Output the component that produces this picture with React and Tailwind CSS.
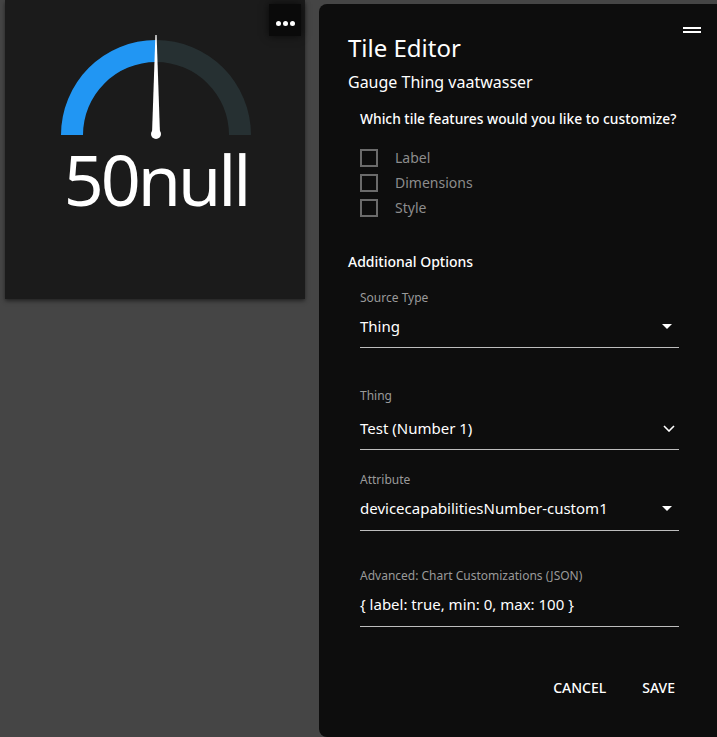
import React from "react";

function Checkbox({ label }) {
  return (
    <div className="flex items-center h-[25px]">
      <div className="w-[18px] h-[18px] border-2 border-[#6b6b6b] box-border" />
      <span className="ml-[17px] text-[14px] leading-[20px] text-[#8c8c8c]">{label}</span>
    </div>
  );
}

function Caret() {
  return (
    <svg width="10" height="5" viewBox="0 0 10 5" className="mr-[7px]">
      <path d="M0 0 L10 0 L5 5 Z" fill="#ffffff" />
    </svg>
  );
}

function Chevron() {
  return (
    <svg width="12" height="7" viewBox="0 0 12 7" className="mr-[4px]">
      <path d="M1 1 L6 6 L11 1" fill="none" stroke="#ffffff" strokeWidth="1.6" />
    </svg>
  );
}

function Field({ label, value, icon, mt, gap, pb }) {
  return (
    <div className="ml-[12px]" style={{ marginTop: mt }}>
      <div className="text-[12px] leading-[16px] text-[#9a9a9a]">{label}</div>
      <div
        className="flex items-center justify-between border-b border-[#bdbdbd]"
        style={{ marginTop: gap, paddingBottom: pb }}
      >
        <span className="text-[15px] leading-[28px] text-white whitespace-nowrap">{value}</span>
        {icon}
      </div>
    </div>
  );
}

export default function App() {
  return (
    <div
      className="w-[717px] h-[737px] bg-[#454545] flex overflow-hidden"
      style={{ fontFamily: '"Noto Sans", "Open Sans", sans-serif' }}
    >
      <div className="relative w-[300px] h-[299px] ml-[5px] bg-[#1b1b1b] flex flex-col items-center shadow-[0_2px_4px_rgba(0,0,0,0.5)] shrink-0">
        <svg width="200" height="112" viewBox="0 0 200 112" className="mt-[30px] ml-[2px]">
          <path d="M5 105 A95 95 0 0 1 100 10 L100 32 A73 73 0 0 0 27 105 Z" fill="#2196f3" />
          <path d="M100 10 A95 95 0 0 1 195 105 L173 105 A73 73 0 0 0 100 32 Z" fill="#263032" />
          <path d="M99.4 5 L100.6 5 L104 104 L96 104 Z" fill="#ffffff" />
          <circle cx="100" cy="104" r="5" fill="#ffffff" />
        </svg>
        <div className="mt-[2px] text-[70px] leading-[70px] text-white tracking-[-3px] ml-[2px]">50null</div>
        <div className="absolute top-[4px] right-[4px] w-[32px] h-[32px] bg-[#0a0a0a] flex items-center justify-center shadow-[0_0_8px_rgba(0,0,0,0.7)]">
          <div className="flex gap-[2px] mt-[6px]">
            <div className="w-[5px] h-[5px] rounded-full bg-white" />
            <div className="w-[5px] h-[5px] rounded-full bg-white" />
            <div className="w-[5px] h-[5px] rounded-full bg-white" />
          </div>
        </div>
      </div>

      <div className="relative flex-1 ml-[14px] mt-[4px] h-[733px] bg-[#0d0d0d] rounded-l-lg pt-[28px] pl-[29px] pr-[38px]">
        <div className="absolute top-[23px] left-[364px] w-[18px] flex flex-col gap-[2px]">
          <div className="h-[2px] bg-white" />
          <div className="h-[2px] bg-white" />
        </div>
        <div className="text-[24px] leading-[32px] text-white">Tile Editor</div>
        <div className="mt-[6px] text-[16px] leading-[24px] text-white">Gauge Thing vaatwasser</div>
        <div className="mt-[15px] ml-[12px] text-[13.8px] leading-[20px] font-medium text-white whitespace-nowrap">
          Which tile features would you like to customize?
        </div>
        <div className="mt-[16px] ml-[12px] flex flex-col">
          <Checkbox label="Label" />
          <Checkbox label="Dimensions" />
          <Checkbox label="Style" />
        </div>
        <div className="mt-[32px] text-[14px] leading-[20px] font-medium text-white">Additional Options</div>

        <Field label="Source Type" value="Thing" icon={<Caret />} mt={18} gap={6} pb={7} />
        <Field label="Thing" value="Test (Number 1)" icon={<Chevron />} mt={40} gap={10} pb={7} />
        <Field label="Attribute" value="devicecapabilitiesNumber-custom1" icon={<Caret />} mt={22} gap={6} pb={8} />
        <Field label="Advanced: Chart Customizations (JSON)" value="{ label: true, min: 0, max: 100 }" mt={37} gap={6} pb={8} />

        <div className="mt-[51px] flex justify-end pr-[4px] gap-[36px] text-[14px] leading-[20px] font-medium text-white">
          <span>CANCEL</span>
          <span>SAVE</span>
        </div>
      </div>
    </div>
  );
}
